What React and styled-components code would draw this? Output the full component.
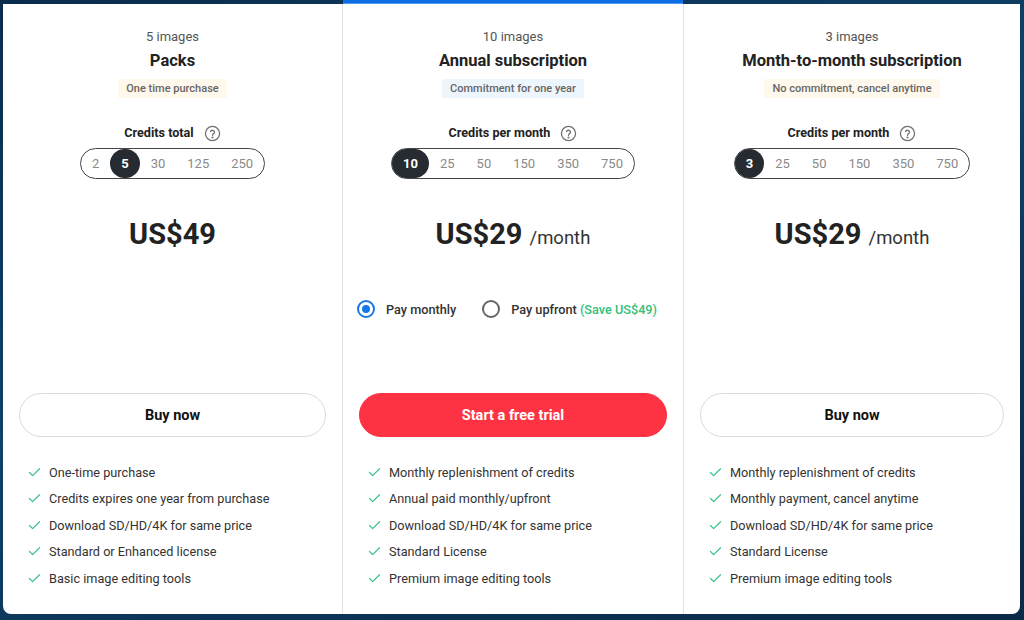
import React from "react"
import styled, { createGlobalStyle } from "styled-components"
import { Check } from "lucide-react"

const GlobalStyle = createGlobalStyle`
  html, body {
    margin: 0;
    padding: 0;
    height: 100%;
  }
  body {
    font-family: Roboto, "Liberation Sans", Arial, sans-serif;
    background: linear-gradient(160deg, #0a2c4c 0%, #0f4169 45%, #0c3557 70%, #0a2a47 100%);
    overflow: hidden;
  }
`

const Page = styled.div`
  box-sizing: border-box;
  height: 620px;
  padding: 4px 4px 0 3px;
`

const Panel = styled.section`
  display: grid;
  grid-template-columns: 339px 341px 337px;
  height: 610px;
  background: #fff;
  border-radius: 0 0 8px 8px;
`

const Card = styled.article`
  position: relative;
  display: flex;
  flex-direction: column;
  align-items: center;
  box-sizing: border-box;
  padding: 24px 16px 0;
  border-left: ${(p) => (p.$first ? "none" : "1px solid #e1e1e1")};

  ${(p) =>
    p.$featured &&
    `
    &::before {
      content: "";
      position: absolute;
      top: -4px;
      left: 0;
      right: 0;
      height: 4px;
      background: #0e6fe4;
      box-shadow: inset 0 -1px 0 #4f9af0;
    }
  `}
`

const Count = styled.div`
  font-size: 13px;
  line-height: 18px;
  color: #555;
`

const Title = styled.h2`
  margin: 4px 0 0;
  font-size: 16.5px;
  line-height: 22px;
  font-weight: 700;
  color: #222;
`

const Badge = styled.span`
  margin-top: 7px;
  height: 19px;
  line-height: 19px;
  padding: 0 8px;
  font-size: 11px;
  font-weight: 500;
  color: #666;
  background: ${(p) => (p.$tone === "blue" ? "#edf5fd" : "#fff8ec")};
`

const CreditsLabel = styled.div`
  display: flex;
  align-items: center;
  gap: 10px;
  margin-top: 26px;
  font-size: 12.6px;
  line-height: 18px;
  font-weight: 700;
  color: #222;
`

const Picker = styled.div`
  display: flex;
  margin-top: 6px;
  border: 1px solid #444;
  border-radius: 16px;
`

const Option = styled.span`
  height: 29px;
  line-height: 29px;
  padding: 0 11px;
  border-radius: 15px;
  font-size: 13px;
  font-weight: ${(p) => (p.$active ? 700 : 400)};
  color: ${(p) => (p.$active ? "#fff" : "#8a8a8a")};
  background: ${(p) => (p.$active ? "#262a31" : "transparent")};
`

const Middle = styled.div`
  display: flex;
  flex-direction: column;
  align-items: center;
  align-self: stretch;
  box-sizing: border-box;
  height: 214px;
  padding-top: 39px;
`

const Price = styled.div`
  display: flex;
  align-items: baseline;
  gap: 7px;
  height: 32px;
  line-height: 32px;
  font-size: 29px;
  font-weight: 700;
  color: #222;
`

const Per = styled.span`
  font-size: 18.5px;
  font-weight: 400;
  color: #333;
`

const PayRow = styled.div`
  display: flex;
  align-items: center;
  gap: 26px;
  margin: 50px 12px 0 0;
  white-space: nowrap;
`

const PayOption = styled.label`
  display: flex;
  flex-shrink: 0;
  align-items: center;
  gap: 11px;
  font-size: 12.7px;
  font-weight: 500;
  color: #333;
`

const Radio = styled.span`
  box-sizing: border-box;
  flex-shrink: 0;
  width: 18px;
  height: 18px;
  border-radius: 50%;
  border: 2px solid ${(p) => (p.$checked ? "#1877e8" : "#666")};
  display: flex;
  align-items: center;
  justify-content: center;

  &::after {
    content: "";
    width: 8px;
    height: 8px;
    border-radius: 50%;
    background: ${(p) => (p.$checked ? "#1877e8" : "transparent")};
  }
`

const Save = styled.span`
  color: #33c07a;
  font-weight: 500;
`

const Action = styled.button`
  width: 100%;
  height: 44px;
  border-radius: 22px;
  font-family: inherit;
  font-size: 14.5px;
  font-weight: 700;
  cursor: pointer;
  border: 1px solid ${(p) => (p.$primary ? "#fd3242" : "#dadada")};
  background: ${(p) => (p.$primary ? "#fd3242" : "#fff")};
  color: ${(p) => (p.$primary ? "#fff" : "#111")};
`

const Features = styled.ul`
  align-self: stretch;
  list-style: none;
  margin: 22px 0 0;
  padding: 0 0 0 8px;
`

const Feature = styled.li`
  display: flex;
  align-items: center;
  gap: 7px;
  height: 26.5px;
  font-size: 12.7px;
  color: #333;
`

const HelpIcon = () => (
  <svg width="17" height="17" viewBox="0 0 24 24" fill="none" stroke="#6f6f6f" strokeWidth="1.8" strokeLinecap="round">
    <circle cx="12" cy="12" r="10" />
    <path d="M9.2 9.3a2.9 2.9 0 0 1 5.6 1c0 1.9-2.8 2.4-2.8 4.2" />
    <circle cx="12" cy="17.6" r="0.6" fill="#6f6f6f" />
  </svg>
)

const plans = [
  {
    count: "5 images",
    title: "Packs",
    note: "One time purchase",
    tone: "cream",
    label: "Credits total",
    options: [2, 5, 30, 125, 250],
    selected: 5,
    price: "US$49",
    button: "Buy now",
    features: [
      "One-time purchase",
      "Credits expires one year from purchase",
      "Download SD/HD/4K for same price",
      "Standard or Enhanced license",
      "Basic image editing tools",
    ],
  },
  {
    count: "10 images",
    title: "Annual subscription",
    note: "Commitment for one year",
    tone: "blue",
    label: "Credits per month",
    options: [10, 25, 50, 150, 350, 750],
    selected: 10,
    price: "US$29",
    per: "/month",
    featured: true,
    button: "Start a free trial",
    features: [
      "Monthly replenishment of credits",
      "Annual paid monthly/upfront",
      "Download SD/HD/4K for same price",
      "Standard License",
      "Premium image editing tools",
    ],
  },
  {
    count: "3 images",
    title: "Month-to-month subscription",
    note: "No commitment, cancel anytime",
    tone: "cream",
    label: "Credits per month",
    options: [3, 25, 50, 150, 350, 750],
    selected: 3,
    price: "US$29",
    per: "/month",
    button: "Buy now",
    features: [
      "Monthly replenishment of credits",
      "Monthly payment, cancel anytime",
      "Download SD/HD/4K for same price",
      "Standard License",
      "Premium image editing tools",
    ],
  },
]

const PlanCard = ({ plan, first }) => (
  <Card $first={first} $featured={plan.featured}>
    <Count>{plan.count}</Count>
    <Title>{plan.title}</Title>
    <Badge $tone={plan.tone}>{plan.note}</Badge>
    <CreditsLabel>
      {plan.label}
      <HelpIcon />
    </CreditsLabel>
    <Picker>
      {plan.options.map((n) => (
        <Option key={n} $active={n === plan.selected}>
          {n}
        </Option>
      ))}
    </Picker>
    <Middle>
      <Price>
        {plan.price}
        {plan.per && <Per>{plan.per}</Per>}
      </Price>
      {plan.featured && (
        <PayRow>
          <PayOption>
            <Radio $checked />
            Pay monthly
          </PayOption>
          <PayOption>
            <Radio />
            <span>
              Pay upfront <Save>(Save US$49)</Save>
            </span>
          </PayOption>
        </PayRow>
      )}
    </Middle>
    <Action $primary={plan.featured}>{plan.button}</Action>
    <Features>
      {plan.features.map((f) => (
        <Feature key={f}>
          <Check size={15} color="#3cc48a" strokeWidth={2} />
          {f}
        </Feature>
      ))}
    </Features>
  </Card>
)

const App = () => (
  <Page>
    <GlobalStyle />
    <Panel>
      {plans.map((plan, i) => (
        <PlanCard key={plan.title} plan={plan} first={i === 0} />
      ))}
    </Panel>
  </Page>
)

export default App
